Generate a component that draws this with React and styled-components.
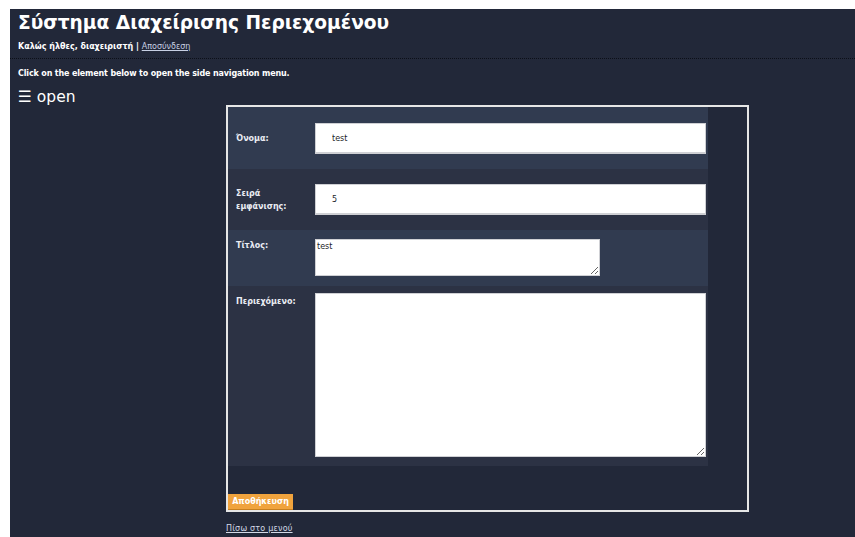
import React from 'react'
import styled, { createGlobalStyle } from 'styled-components'

const GlobalStyle = createGlobalStyle`
    html {
        background: #ffffff;
    }
    body {
        margin: 9px 0 0 10px;
        font-family: "DejaVu Sans", Verdana, sans-serif;
        overflow: hidden;
    }
`

const Page = styled.div`
    background: #222839;
    color: #ffffff;
    min-height: calc(100vh - 9px);
    box-sizing: border-box;
`

const Header = styled.header`
    padding: 0 8px;
    border-bottom: 1px dotted #0c0f18;
    height: 50px;
    box-sizing: border-box;
`

const Title = styled.h1`
    margin: 0;
    padding-top: 3px;
    font-size: 18.6px;
    line-height: 22px;
    font-weight: bold;
`

const Welcome = styled.div`
    margin-top: 8px;
    font-size: 8px;
    line-height: 10px;
    font-weight: bold;

    a {
        color: #c8d0e4;
        font-weight: normal;
    }
`

const Content = styled.div`
    padding: 10px 8px 0;
`

const Hint = styled.p`
    margin: 0;
    font-size: 8px;
    line-height: 10px;
    font-weight: bold;
    letter-spacing: -0.15px;
`

const Opener = styled.div`
    margin: 10px 0 0;
    font-family: "DejaVu Sans", Verdana, sans-serif;
    font-size: 15.5px;
    line-height: 16px;
    cursor: pointer;
`

const FormBox = styled.form`
    margin: 0 0 0 208px;
    width: 523px;
    height: 407px;
    box-sizing: border-box;
    border: 2px solid #e6e6e6;
    display: flex;
    flex-direction: column;
`

const Fields = styled.div`
    width: 480px;
    display: grid;
    grid-template-columns: 80px 400px;
`

const Row = styled.div`
    display: contents;
`

const Label = styled.label`
    background: ${p => p.$alt ? '#2c3244' : '#313b50'};
    height: ${p => p.$h}px;
    box-sizing: border-box;
    padding: ${p => p.$top ? '9px 8px 0' : '0 8px'};
    display: flex;
    align-items: ${p => p.$top ? 'flex-start' : 'center'};
    font-size: 8px;
    line-height: 13px;
    font-weight: bold;
    color: #e9ecf3;
`

const Cell = styled.div`
    background: ${p => p.$alt ? '#2c3244' : '#313b50'};
    height: ${p => p.$h}px;
    box-sizing: border-box;
    padding: ${p => p.$pad}px 2px 0 7px;
`

const TextInput = styled.input`
    display: block;
    width: 391px;
    height: 31px;
    box-sizing: border-box;
    border: 2px solid #cfd0d4;
    border-width: 1px 1px 2px 1px;
    padding: 0 16px;
    font-family: "DejaVu Sans", Verdana, sans-serif;
    font-size: 8px;
    color: #1b1e28;
    background: #ffffff;
    outline: none;
`

const TextArea = styled.textarea`
    display: block;
    width: ${p => p.$w}px;
    height: ${p => p.$h}px;
    box-sizing: border-box;
    border: 1px solid #cfd0d4;
    padding: 2px 1px;
    font-family: "DejaVu Sans", Verdana, sans-serif;
    font-size: 8px;
    color: #1b1e28;
    background: #ffffff;
    resize: both;
    outline: none;
`

const Actions = styled.div`
    margin-top: auto;
`

const SaveButton = styled.button`
    width: 65px;
    height: 16px;
    padding: 0;
    border: none;
    border-bottom: 1px solid #c8801f;
    background: #f0a33d;
    color: #ffffff;
    font-family: "DejaVu Sans", Verdana, sans-serif;
    font-size: 8px;
    font-weight: bold;
    cursor: pointer;
`

const BackLink = styled.a`
    display: inline-block;
    margin: 12px 0 0 208px;
    font-size: 8px;
    letter-spacing: 0.2px;
    color: #d4d9e6;
`

const rows = [
    { label: 'Όνομα:', h: 62, pad: 16, input: 'test' },
    { label: <>Σειρά<br />εμφάνισης:</>, h: 61, pad: 15, input: '5', alt: true },
    { label: 'Τίτλος:', h: 56, pad: 9, area: { w: 285, h: 37, value: 'test' }, top: true },
    { label: 'Περιεχόμενο:', h: 180, pad: 7, area: { w: 391, h: 164, value: '' }, top: true, alt: true },
]

export default function App() {
    return (
        <>
            <GlobalStyle />
            <Page>
                <Header>
                    <Title>Σύστημα Διαχείρισης Περιεχομένου</Title>
                    <Welcome>
                        Καλώς ήλθες, διαχειριστή | <a href="#">Αποσύνδεση</a>
                    </Welcome>
                </Header>
                <Content>
                    <Hint>Click on the element below to open the side navigation menu.</Hint>
                    <Opener>☰ open</Opener>
                    <FormBox onSubmit={e => e.preventDefault()}>
                        <Fields>
                            {rows.map((row, i) => (
                                <Row key={i}>
                                    <Label $h={row.h} $alt={row.alt} $top={row.top}>{row.label}</Label>
                                    <Cell $h={row.h} $alt={row.alt} $pad={row.pad}>
                                        {row.area
                                            ? <TextArea $w={row.area.w} $h={row.area.h} defaultValue={row.area.value} />
                                            : <TextInput defaultValue={row.input} />}
                                    </Cell>
                                </Row>
                            ))}
                        </Fields>
                        <Actions>
                            <SaveButton type="submit">Αποθήκευση</SaveButton>
                        </Actions>
                    </FormBox>
                    <BackLink href="#">Πίσω στο μενού</BackLink>
                </Content>
            </Page>
        </>
    )
}
